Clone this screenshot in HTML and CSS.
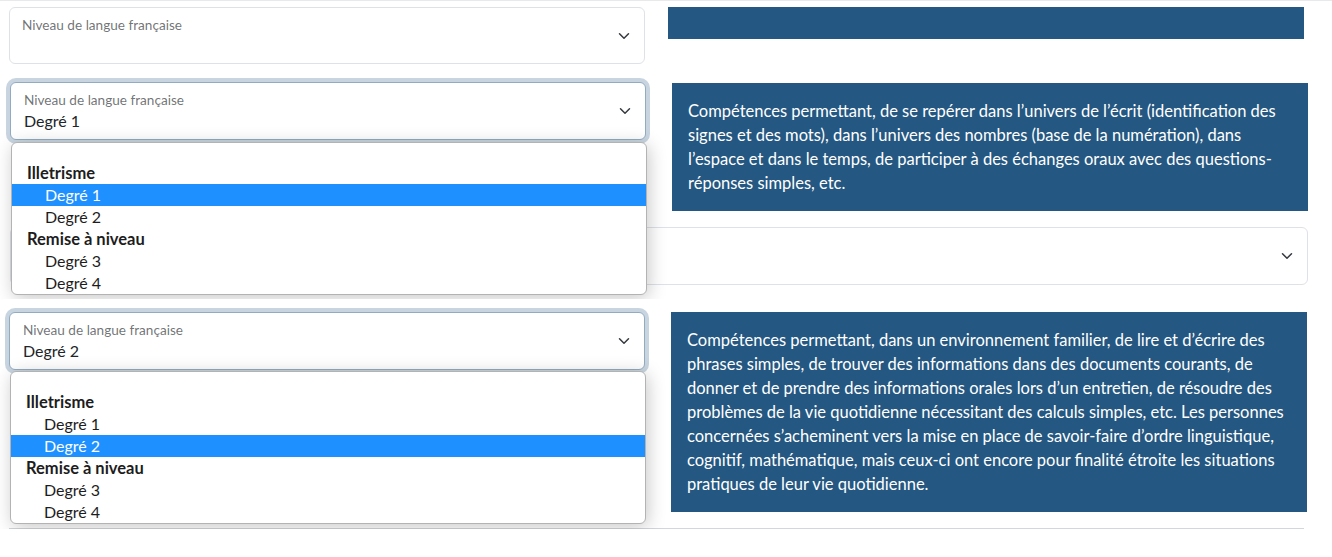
FILE: index.html
```html
<!DOCTYPE html>
<html lang="fr">
<head>
<meta charset="utf-8">
<title>Niveau de langue française</title>
<link rel="stylesheet" href="styles.css">
</head>
<body>
<section class="shot shot1">
  <div class="row row1">
    <div class="field">
      <div class="select">
        <div class="select-text">
          <span class="select-label">Niveau de langue française</span>
        </div>
        <svg class="chev" width="16" height="12" viewBox="0 0 16 16"><path d="m2 5 6 6 6-6" fill="none" stroke="#343a40" stroke-width="2" stroke-linecap="round" stroke-linejoin="round"/></svg>
      </div>
    </div>
    <div class="info info-empty"></div>
  </div>
</section>

<section class="shot shot2">
  <div class="row row2">
    <div class="field">
      <div class="select focused">
        <div class="select-text">
          <span class="select-label">Niveau de langue française</span>
          <span class="select-value">Degré 1</span>
        </div>
        <svg class="chev" width="16" height="12" viewBox="0 0 16 16"><path d="m2 5 6 6 6-6" fill="none" stroke="#343a40" stroke-width="2" stroke-linecap="round" stroke-linejoin="round"/></svg>
      </div>
      <ul class="dropdown dd2">
        <li class="opt blank"></li>
        <li class="group">Illetrisme</li>
        <li class="opt sel">Degré 1</li>
        <li class="opt">Degré 2</li>
        <li class="group">Remise à niveau</li>
        <li class="opt">Degré 3</li>
        <li class="opt">Degré 4</li>
      </ul>
    </div>
    <div class="info info2">Compétences permettant, de se repérer dans l’univers de l’écrit (identification des signes et des mots), dans l’univers des nombres (base de la numération), dans l’espace et dans le temps, de participer à des échanges oraux avec des questions-réponses simples, etc.</div>
  </div>
  <div class="select wide">
    <div class="select-text"></div>
    <svg class="chev" width="16" height="12" viewBox="0 0 16 16"><path d="m2 5 6 6 6-6" fill="none" stroke="#343a40" stroke-width="2" stroke-linecap="round" stroke-linejoin="round"/></svg>
  </div>
</section>

<section class="shot shot3">
  <div class="row row3">
    <div class="field">
      <div class="select focused">
        <div class="select-text">
          <span class="select-label">Niveau de langue française</span>
          <span class="select-value">Degré 2</span>
        </div>
        <svg class="chev" width="16" height="12" viewBox="0 0 16 16"><path d="m2 5 6 6 6-6" fill="none" stroke="#343a40" stroke-width="2" stroke-linecap="round" stroke-linejoin="round"/></svg>
      </div>
      <ul class="dropdown dd3">
        <li class="opt blank"></li>
        <li class="group">Illetrisme</li>
        <li class="opt">Degré 1</li>
        <li class="opt sel">Degré 2</li>
        <li class="group">Remise à niveau</li>
        <li class="opt">Degré 3</li>
        <li class="opt">Degré 4</li>
      </ul>
    </div>
    <div class="info info3">Compétences permettant, dans un environnement familier, de lire et d’écrire des phrases simples, de trouver des informations dans des documents courants, de donner et de prendre des informations orales lors d’un entretien, de résoudre des problèmes de la vie quotidienne nécessitant des calculs simples, etc. Les personnes concernées s’acheminent vers la mise en place de savoir-faire d’ordre linguistique, cognitif, mathématique, mais ceux-ci ont encore pour finalité étroite les situations pratiques de leur vie quotidienne.</div>
  </div>
  <div class="bottom-line"></div>
</section>
</body>
</html>
```
FILE: styles.css
```css
* { box-sizing: border-box; }
html, body { margin: 0; padding: 0; background: #fff; }
body {
  font-family: Lato, "Noto Sans", Arial, sans-serif;
  font-size: 16px;
  line-height: 24px;
  color: #212529;
  width: 1332px;
  height: 557px;
  overflow: hidden;
}

.shot { position: relative; overflow: hidden; }
.shot1 { height: 72px; border-top: 1px solid #e8e9ea; padding: 6px 0 0 9px; }
.shot2 { height: 227px; padding: 10px 0 0 10px; }
.shot3 { height: 230px; padding: 13px 0 0 9px; }

.row { display: flex; align-items: flex-start; }
.row1 { gap: 23px; }
.row2 { gap: 26px; }
.row3 { gap: 26px; }

.field { position: relative; width: 636px; flex: none; }

.select {
  display: flex;
  align-items: center;
  height: 58px;
  border: 1px solid #dee2e6;
  border-radius: 6px;
  background: #fff;
  padding: 0 12px 0 13px;
}
.shot1 .select { height: 57px; }
.select.focused {
  border-color: #93abc1;
  box-shadow: 0 0 0 4px rgba(36, 88, 130, 0.25);
}
.select.wide { width: 1298px; margin-top: 16px; }

.select-text {
  flex: 1;
  align-self: stretch;
  display: flex;
  flex-direction: column;
  padding-top: 8px;
}
.select-label {
  font-size: 13.6px;
  line-height: 18px;
  color: rgba(33, 37, 41, 0.65);
}
.shot1 .select-label { margin-left: -1px; }
.select-value { font-size: 16px; line-height: 23px; color: #212529; }
.chev { flex: none; width: 16px; height: 12px; }

.dropdown {
  position: absolute;
  left: 1px;
  width: 636px;
  margin: 0;
  padding: 0;
  list-style: none;
  background: #fff;
  border: 1px solid #b3b3b3;
  border-radius: 6px;
  overflow: hidden;
  box-shadow: 2px 3px 18px rgba(0, 0, 0, 0.22);
  z-index: 5;
}
.dd2 { top: 60px; }
.dd3 { top: 59px; }
.dropdown li { height: 22px; line-height: 22px; font-size: 16px; color: #1d1d1d; white-space: nowrap; }
.dropdown .blank { height: 19px; }
.dropdown .group { font-weight: 700; font-size: 16.5px; padding-left: 15px; }
.dropdown .opt { padding-left: 33px; }
.dropdown .sel { background: #1e90ff; color: #fff; }

.info {
  width: 636px;
  flex: none;
  background: #245781;
  color: #fff;
  padding: 16px;
  font-size: 16.5px;
  line-height: 24px;
}
.info-empty { height: 32px; }
.info2 { margin-top: 1px; }

.bottom-line { width: 1295px; height: 17px; border-bottom: 1px solid #d3d6da; }
```
